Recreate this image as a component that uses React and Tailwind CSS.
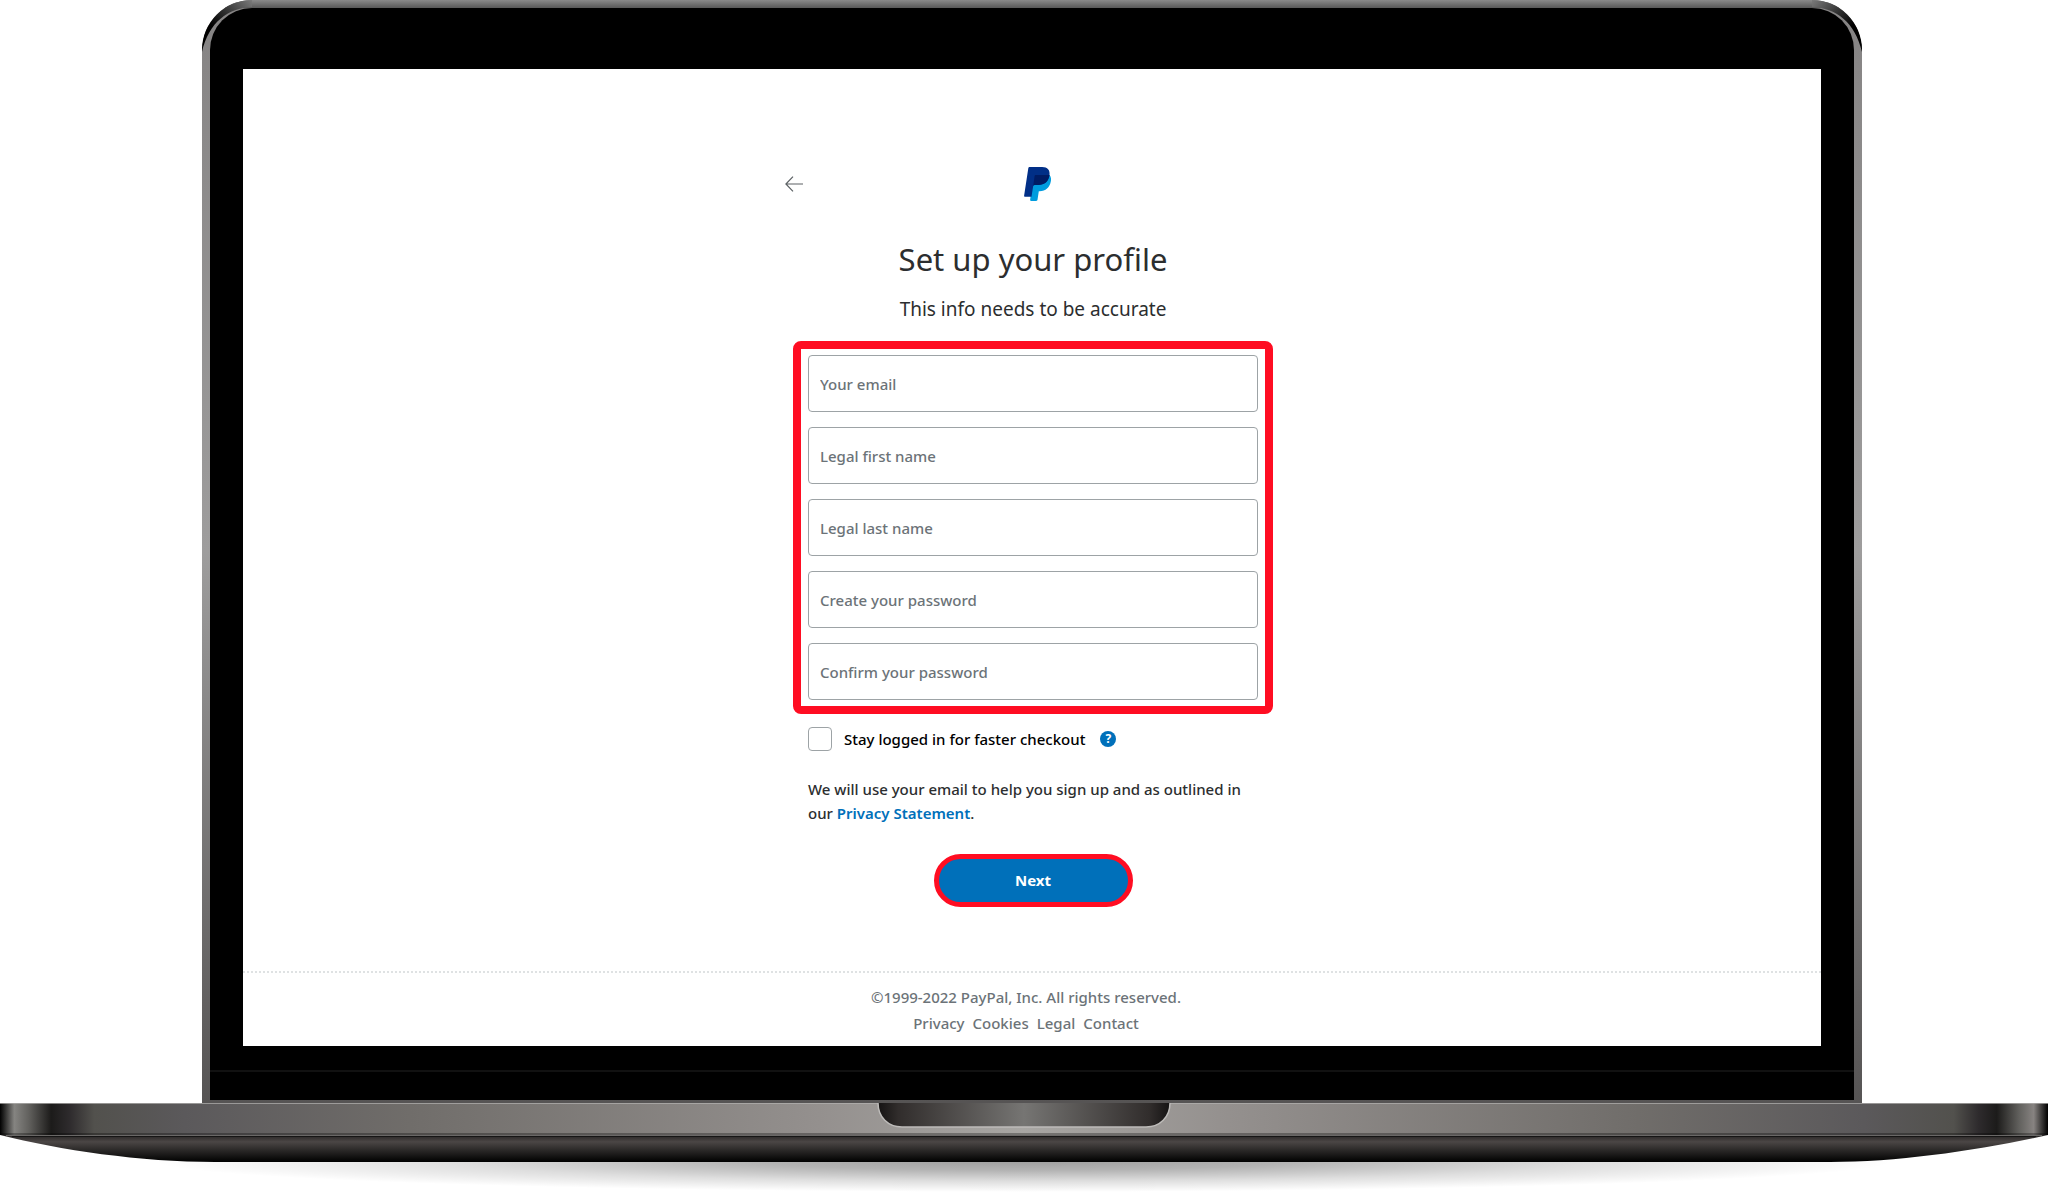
import { useState } from 'react';

const fields = [
  { id: 'email', label: 'Your email', type: 'email' },
  { id: 'firstName', label: 'Legal first name', type: 'text' },
  { id: 'lastName', label: 'Legal last name', type: 'text' },
  { id: 'password', label: 'Create your password', type: 'password' },
  { id: 'confirmPassword', label: 'Confirm your password', type: 'password' },
];

const footerLinks = ['Privacy', 'Cookies', 'Legal', 'Contact'];

function PayPalLogo() {
  return (
    <svg width="27" height="34" viewBox="0 0 27 34" role="img" aria-label="PayPal">
      <path fill="#009cde" d="M9.5 8H25.4c1.5 1.5 2 3.8 1.4 6.6-1.2 6-5 9.6-11.2 9.6h-.8l-1.3 8.6c-.1.7-.6 1.100-1.300 1.100H6.900c-.6 0-.9-.4-.8-1z" />
      <path fill="#012f87" d="M5.8 0h12.400c5.300 0 8 3 7.300 8-.9 6.600-5 10-11.500 10h-3.200c-.9 0-1.500.5-1.700 1.400L7.500 29.700H.8c-.5 0-.8-.4-.7-.9L4.300 1.300C4.400.5 5 0 5.800 0z" />
      <path fill="#001c64" d="M11.600 8h13.900c-.9 6.600-5 10-11.500 10h-3.200c-.7 0-1.300.4-1.600 1L10.600 9c.1-.6.500-1 1-1z" />
    </svg>
  );
}

function BackArrow() {
  return (
    <svg width="18" height="16" viewBox="0 0 18 16" fill="none" stroke="#5c6164" strokeWidth="1.2" aria-hidden="true">
      <path d="M18 8H1M8 .7.9 8 8 15.3" />
    </svg>
  );
}

// Dark reflection on the outer corner of the lid
function LidCorner({ side }) {
  return (
    <svg
      width="50"
      height="52"
      viewBox="0 0 50 52"
      className={side === 'left' ? 'absolute top-0 left-0' : 'absolute top-0 right-0 -scale-x-100'}
      aria-hidden="true"
    >
      <defs>
        <linearGradient id={`corner-${side}`} x1="0" y1="1" x2="1" y2="0">
          <stop offset="0.35" stopColor="#000" />
          <stop offset="0.6" stopColor="#2c2c2c" />
          <stop offset="1" stopColor="#7a7a7a" />
        </linearGradient>
      </defs>
      <path fill={`url(#corner-${side})`} d="M0 52V44C4 18 22 0 50 0v7C26 8 7 22 0 52z" />
    </svg>
  );
}

function LaptopBase() {
  return (
    <svg viewBox="0 0 2048 90" preserveAspectRatio="none" className="block w-full h-[90px]" aria-hidden="true">
      <defs>
        <linearGradient id="deck">
          <stop offset="0" stopColor="#000" />
          <stop offset="0.007" stopColor="#858481" />
          <stop offset="0.014" stopColor="#62615e" />
          <stop offset="0.025" stopColor="#1c1b1a" />
          <stop offset="0.034" stopColor="#2e2b2d" />
          <stop offset="0.046" stopColor="#52514d" />
          <stop offset="0.09" stopColor="#5b595b" />
          <stop offset="0.2" stopColor="#706d6a" />
          <stop offset="0.4" stopColor="#94908e" />
          <stop offset="0.5" stopColor="#a8a6a3" />
          <stop offset="0.6" stopColor="#94908e" />
          <stop offset="0.8" stopColor="#706d6a" />
          <stop offset="0.91" stopColor="#5b595b" />
          <stop offset="0.954" stopColor="#52514d" />
          <stop offset="0.966" stopColor="#2e2b2d" />
          <stop offset="0.975" stopColor="#1c1b1a" />
          <stop offset="0.986" stopColor="#62615e" />
          <stop offset="0.993" stopColor="#878381" />
          <stop offset="1" stopColor="#000" />
        </linearGradient>
        <linearGradient id="underside" x1="0" y1="0" x2="0" y2="1">
          <stop offset="0" stopColor="#262424" />
          <stop offset="0.25" stopColor="#4b4645" />
          <stop offset="0.55" stopColor="#2c2a29" />
          <stop offset="1" stopColor="#000" />
        </linearGradient>
        <linearGradient id="notch">
          <stop offset="0" stopColor="#151313" />
          <stop offset="0.07" stopColor="#312d2c" />
          <stop offset="0.5" stopColor="#767573" />
          <stop offset="0.93" stopColor="#312d2c" />
          <stop offset="1" stopColor="#151313" />
        </linearGradient>
        <radialGradient id="shadow">
          <stop offset="0" stopColor="#000" stopOpacity="0.38" />
          <stop offset="0.3" stopColor="#000" stopOpacity="0.3" />
          <stop offset="0.65" stopColor="#000" stopOpacity="0.13" />
          <stop offset="1" stopColor="#000" stopOpacity="0" />
        </radialGradient>
      </defs>
      <ellipse cx="1024" cy="58" rx="870" ry="31" fill="url(#shadow)" />
      <path d="M0 32h2048C1980 47 1900 59 1830 59H215C140 59 60 47 0 32z" fill="url(#underside)" />
      <rect width="2048" height="32" fill="url(#deck)" />
      <rect width="2048" height="1" fill="#b4b2b0" opacity="0.7" />
      <rect y="30" width="2048" height="2" fill="#000" opacity="0.3" />
      <rect y="32" x="6" width="2036" height="1" fill="#6a6867" />
      <rect y="33" x="12" width="2024" height="1" fill="#161515" />
      <path d="M878 0c0 14 10 24 24 24h244c14 0 24-10 24-24z" fill="url(#notch)" />
      <path d="M878 0c0 14 10 24 24 24h244c14 0 24-10 24-24" fill="none" stroke="#bdbbb9" strokeWidth="1.5" />
    </svg>
  );
}

function ProfileForm() {
  const [values, setValues] = useState({});
  const [stayLoggedIn, setStayLoggedIn] = useState(false);

  const handleChange = (e) => {
    setValues({ ...values, [e.target.id]: e.target.value });
  };

  return (
    <form onSubmit={(e) => e.preventDefault()} className="flex flex-col mt-[18px]">
      <div className="flex flex-col gap-[15px] border-8 border-[#ff0d22] rounded-lg px-[7px] py-1.5">
        {fields.map((field) => (
          <input
            key={field.id}
            id={field.id}
            type={field.type}
            value={values[field.id] || ''}
            onChange={handleChange}
            placeholder={field.label}
            aria-label={field.label}
            className="w-full h-[57px] px-[11px] border border-[#9da3a6] rounded-sm text-[15px] font-medium text-[#2c2e2f] placeholder:text-[#6c7378] outline-none focus:border-[#0070ba]"
          />
        ))}
      </div>

      <div className="flex flex-col px-[15px]">
        <div className="flex items-center mt-[13px]">
          <input
            id="stayLoggedIn"
            type="checkbox"
            checked={stayLoggedIn}
            onChange={(e) => setStayLoggedIn(e.target.checked)}
            className="appearance-none size-6 border border-[#9da3a6] rounded-sm checked:bg-[#0070ba]"
          />
          <label htmlFor="stayLoggedIn" className="ml-3 text-[15px] leading-6 font-medium text-black">
            Stay logged in for faster checkout
          </label>
          <button
            type="button"
            aria-label="More about staying logged in"
            className="ml-[15px] size-4 rounded-full bg-[#0070ba] text-white text-xs leading-4 font-bold"
          >
            ?
          </button>
        </div>

        <p className="mt-[26px] text-[15px] leading-6 font-medium">
          We will use your email to help you sign up and as outlined in our{' '}
          <a href="#privacy-statement" className="text-[#0070ba] font-semibold">Privacy Statement</a>.
        </p>
      </div>

      <button
        type="submit"
        className="self-center mt-[29px] w-[199px] h-[53px] rounded-full border-5 border-[#ff0d22] bg-[#0070ba] text-white text-[15px] font-bold"
      >
        Next
      </button>
    </form>
  );
}

export default function App() {
  return (
    <div className="bg-white text-[#2c2e2f] font-['Noto_Sans',sans-serif]">
      <div className="pl-[202px] pr-[186px]">
        <div className="relative overflow-hidden rounded-t-[50px] bg-linear-to-b from-[#858383] via-[#9e9d9d] via-50% to-[#565454] px-2 pb-[3px]">
          <div className="h-2 -mx-2 bg-linear-to-b from-[#8a8a8a] to-[#585858]" />
          <LidCorner side="left" />
          <LidCorner side="right" />
          <div className="relative bg-black rounded-t-[42px] px-[33px] pt-[61px]">
            <div className="flex flex-col bg-white">
              <main className="self-center w-[482px] pl-0.5 pt-[98px]">
                <header className="grid grid-cols-[1fr_auto_1fr] items-center w-[504px] -ml-2">
                  <button type="button" aria-label="Back" className="justify-self-start">
                    <BackArrow />
                  </button>
                  <PayPalLogo />
                </header>
                <h1 className="mt-[38px] text-[31px] leading-10 text-center">Set up your profile</h1>
                <p className="mt-4 text-[19px] leading-7 text-center">This info needs to be accurate</p>
                <ProfileForm />
              </main>

              <footer className="mt-16 pt-[11px] pb-2.5 pr-3 border-t-2 border-dotted border-[#dfe2e3] text-center text-[15px] leading-[26px] font-medium text-[#6c7378]">
                <p>©1999-2022 PayPal, Inc. All rights reserved.</p>
                <nav className="flex justify-center gap-2">
                  {footerLinks.map((link) => (
                    <a key={link} href={`#${link.toLowerCase()}`}>{link}</a>
                  ))}
                </nav>
              </footer>
            </div>
            <div className="h-[54px] pt-6 -mx-[33px]">
              <div className="h-0.5 bg-[#111]" />
            </div>
          </div>
        </div>
      </div>
      <LaptopBase />
    </div>
  );
}
